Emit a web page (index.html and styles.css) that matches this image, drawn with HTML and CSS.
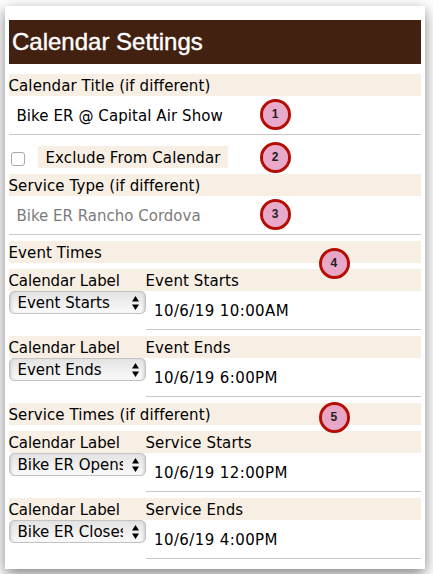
FILE: index.html
```html
<!DOCTYPE html>
<html lang="en">
<head>
<meta charset="utf-8">
<title>Calendar Settings</title>
<link rel="stylesheet" href="styles.css">
</head>
<body>
<main class="panel">
  <h1 class="title"><span>Calendar Settings</span></h1>
  <div class="field first">
    <div class="label"><span>Calendar Title (if different)</span></div>
    <div class="value"><span>Bike ER @ Capital Air Show</span></div>
    <b class="pin p1">1</b>
  </div>
  <div class="check-row">
    <i class="checkbox"></i>
    <div class="label check-label"><span>Exclude From Calendar</span></div>
    <b class="pin p2">2</b>
  </div>
  <div class="field">
    <div class="label"><span>Service Type (if different)</span></div>
    <div class="value muted"><span>Bike ER Rancho Cordova</span></div>
    <b class="pin p3">3</b>
  </div>
  <div class="label section"><span>Event Times</span><b class="pin p4">4</b></div>
  <div class="pair">
    <div class="left">
      <div class="label"><span>Calendar Label</span></div>
      <div class="select"><span class="choice">Event Starts</span><svg class="arrows" viewBox="0 0 7 14"><path d="M3.5 0L7 5.5H0zM0 8.5H7L3.5 14z"/></svg></div>
    </div>
    <div class="right">
      <div class="label"><span>Event Starts</span></div>
      <div class="value date"><span>10/6/19 10:00AM</span></div>
    </div>
  </div>
  <div class="pair">
    <div class="left">
      <div class="label"><span>Calendar Label</span></div>
      <div class="select"><span class="choice">Event Ends</span><svg class="arrows" viewBox="0 0 7 14"><path d="M3.5 0L7 5.5H0zM0 8.5H7L3.5 14z"/></svg></div>
    </div>
    <div class="right">
      <div class="label"><span>Event Ends</span></div>
      <div class="value date"><span>10/6/19 6:00PM</span></div>
    </div>
  </div>
  <div class="label section"><span>Service Times (if different)</span><b class="pin p5">5</b></div>
  <div class="pair">
    <div class="left">
      <div class="label"><span>Calendar Label</span></div>
      <div class="select"><span class="choice">Bike ER Opens</span><svg class="arrows" viewBox="0 0 7 14"><path d="M3.5 0L7 5.5H0zM0 8.5H7L3.5 14z"/></svg></div>
    </div>
    <div class="right">
      <div class="label"><span>Service Starts</span></div>
      <div class="value date"><span>10/6/19 12:00PM</span></div>
    </div>
  </div>
  <div class="pair">
    <div class="left">
      <div class="label"><span>Calendar Label</span></div>
      <div class="select"><span class="choice">Bike ER Closes</span><svg class="arrows" viewBox="0 0 7 14"><path d="M3.5 0L7 5.5H0zM0 8.5H7L3.5 14z"/></svg></div>
    </div>
    <div class="right">
      <div class="label"><span>Service Ends</span></div>
      <div class="value date"><span>10/6/19 4:00PM</span></div>
    </div>
  </div>
</main>
</body>
</html>
```
FILE: styles.css
```css
* { box-sizing: border-box; }
body {
  margin: 0;
  padding: 6px 8px 5px 5px;
  height: 574px;
  overflow: hidden;
  background: #fff;
  font: 15px/22px Verdana, "DejaVu Sans", sans-serif;
  color: #000;
}
.panel {
  width: 420px;
  height: 563px;
  padding: 14px 4px 0;
  background: #fff;
  box-shadow: 0 5px 14px rgba(0, 0, 0, .5);
}
.title {
  margin: 0 0 10px;
  padding-left: 3px;
  height: 44px;
  background: #432110;
  color: #fff;
  font: 400 24px/43px "Liberation Sans", Arial, sans-serif;
  -webkit-text-stroke: .4px #fff;
}
.label {
  height: 22px;
  line-height: 24px;
  background: #f8efe4;
  white-space: nowrap;
  letter-spacing: .1px;
  text-indent: -.5px;
}
.left .label { letter-spacing: -.1px; }
.field, .section, .check-row { position: relative; }
.field, .section, .pair, .check-row { margin-bottom: 6px; }
.first { margin-bottom: 11px; }
.value {
  height: 39px;
  padding-left: 7.5px;
  border-bottom: 1px solid #c8c8c8;
  line-height: 40px;
  letter-spacing: .08px;
  white-space: nowrap;
}
.date { padding-left: 8px; letter-spacing: .4px; }
.muted { color: #7b7b7b; letter-spacing: 0; }
.check-row { display: flex; }
.checkbox {
  width: 14px;
  height: 14px;
  margin: 6px 13px 0 2px;
  border: 1px solid #aaa;
  border-radius: 3px;
}
.check-label { width: 190px; padding-left: 8px; }
.pair { display: flex; height: 61px; }
.left { width: 137px; }
.right { flex: 1; }
.select {
  display: flex;
  align-items: center;
  height: 23px;
  padding: 0 6px 0 7.5px;
  border: 1px solid #c3c3c3;
  border-radius: 5px;
  background: linear-gradient(#e3e3e3, #fafafa);
  box-shadow: inset 3px 0 3px -2px #c8c8c8, inset -3px 0 3px -2px #c8c8c8;
}
.choice {
  width: 105px;
  overflow: hidden;
  white-space: nowrap;
  height: 21px;
  line-height: 22px;
}
.arrows { width: 7px; height: 14px; margin-left: auto; flex: none; }
.pin {
  position: absolute;
  width: 31px;
  height: 31px;
  border: 3px solid #b50c06;
  border-radius: 50%;
  background: rgba(225, 145, 188, .78);
  background-clip: padding-box;
  color: #222;
  font: 700 12px/25px "Liberation Sans", Arial, sans-serif;
  text-align: center;
  text-indent: -1px;
  z-index: 1;
}
.p1 { left: 251px; top: 25px; }
.p2 { left: 251px; top: -4px; }
.p3 { left: 251px; top: 25px; }
.p4 { left: 310px; top: 7px; }
.p5 { left: 310px; top: -1px; }
```
